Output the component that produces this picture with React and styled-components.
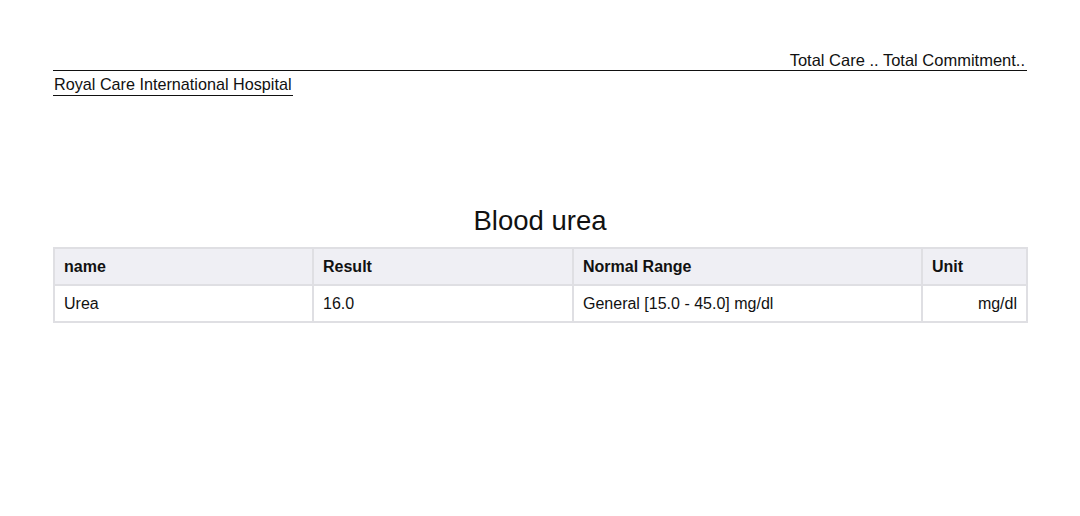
import React from 'react';
import styled, { createGlobalStyle } from 'styled-components';

const GlobalStyle = createGlobalStyle`
      body {
            margin: 0;
            background: #ffffff;
            font-family: "Liberation Sans", Arial, sans-serif;
            color: #111;
      }
`;

const Page = styled.div`
      width: 974px;
      padding: 50px 53px 0;
`;

const Header = styled.div`
      display: flex;
      flex-direction: column;
`;

const Motto = styled.div`
      font-size: 16.5px;
      line-height: 20px;
      padding-right: 2px;
      border-bottom: 1px solid #111;
      text-align: right;
`;

const HospitalName = styled.div`
      align-self: flex-start;
      font-size: 16.2px;
      line-height: 20px;
      margin-top: 3px;
      padding: 0 1px 1px;
      border-bottom: 1px solid #111;
`;

const Title = styled.h1`
      margin: 109px 0 10px;
      text-align: center;
      font-weight: normal;
      font-size: 27.5px;
      line-height: 32px;
`;

const Table = styled.table`
      width: 973px;
      border-collapse: collapse;
      table-layout: fixed;
      font-size: 16px;
`;

const Col = styled.col`
      width: ${p => p.$w}px;
`;

const HeadCell = styled.th`
      background: #efeff4;
      border: 2px solid #dfdfe3;
      text-align: left;
      font-weight: bold;
      padding: 0 9px;
      height: 35px;
`;

const Cell = styled.td`
      border: 2px solid #dfdfe3;
      text-align: ${p => (p.$right ? 'right' : 'left')};
      padding: 0 9px;
      height: 35px;
`;

const columns = [
      { title: 'name', width: 259 },
      { title: 'Result', width: 260 },
      { title: 'Normal Range', width: 349 },
      { title: 'Unit', width: 105 },
];

const App = () => (
      <>
            <GlobalStyle />
            <Page>
                  <Header>
                        <Motto>Total Care .. Total Commitment..</Motto>
                        <HospitalName>Royal Care International Hospital</HospitalName>
                  </Header>
                  <Title>Blood urea</Title>
                  <Table>
                        <colgroup>
                              {columns.map(c => <Col key={c.title} $w={c.width} />)}
                        </colgroup>
                        <thead>
                              <tr>
                                    {columns.map(c => (
                                          <HeadCell key={c.title}>{c.title}</HeadCell>
                                    ))}
                              </tr>
                        </thead>
                        <tbody>
                              <tr>
                                    <Cell>Urea</Cell>
                                    <Cell>16.0</Cell>
                                    <Cell>General [15.0 - 45.0] mg/dl</Cell>
                                    <Cell $right>mg/dl</Cell>
                              </tr>
                        </tbody>
                  </Table>
            </Page>
      </>
);

export default App;
